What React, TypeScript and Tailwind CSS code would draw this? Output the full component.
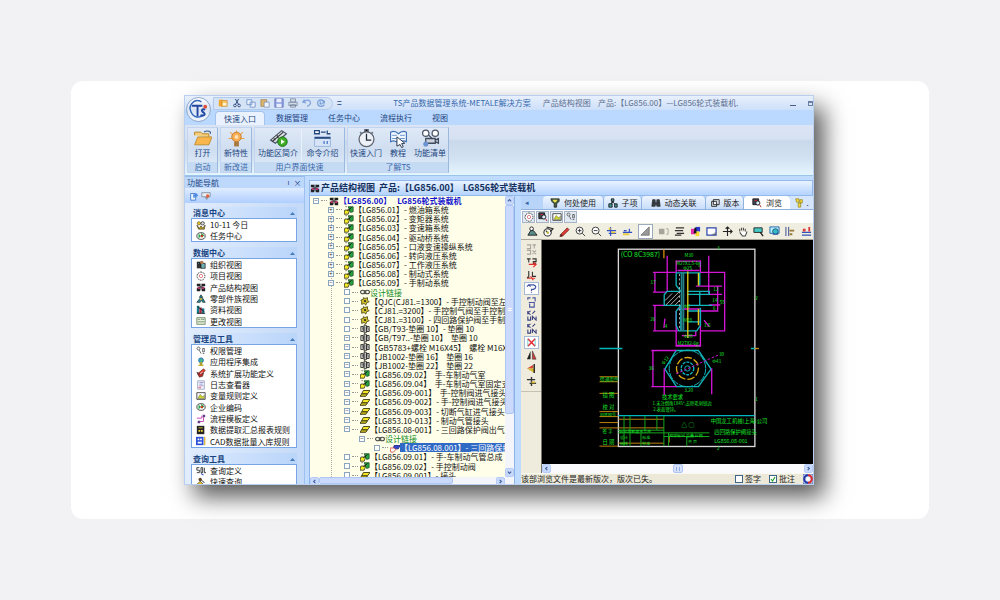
import type { ReactNode } from "react";

const glyphs: Record<string, ReactNode> = {
  folder: <><path d="M1 4V2h4l1 1h4v2" fill="#f4cf78" stroke="#b98324" strokeWidth=".6" /><path d="M1 10l2-5h9l-2 5z" fill="#f8b64c" stroke="#b98324" strokeWidth=".5" /><path d="M7 2c1-1 3-1 4 0v1" fill="none" stroke="#39588a" strokeWidth=".7" /></>,
  folders: <><path d="M1 2h5v8H1z" fill="#f0a52e" /><path d="M5 3h6v7H4z" fill="#f9c766" stroke="#c87b1c" strokeWidth=".7" /><path d="M6 6h4v3H6z" fill="#fff4d5" /></>,
  cut: <><path d="M4 1l4 7M8 1L4 8" stroke="#334e7e" strokeWidth="1.2" /><circle cx="3.5" cy="9" r="1.6" fill="none" stroke="#334e7e" strokeWidth="1.1" /><circle cx="8.5" cy="9" r="1.6" fill="none" stroke="#334e7e" strokeWidth="1.1" /></>,
  copy: <path d="M1 2h6v6H1zM5 5h6v6H5z" fill="#e8f0fc" stroke="#6e91c9" strokeWidth="1" />,
  paste: <><path d="M1 2h7v8H1z" fill="#dcb56b" stroke="#8b7546" strokeWidth=".7" /><path d="M5 5h6v6H5z" fill="#edf3fd" stroke="#7287ad" strokeWidth=".8" /></>,
  save: <><path d="M1 1h10v10H1z" fill="#8f9ee0" stroke="#6374ba" /><path d="M3 1h6v4H3zM3 7h6v4H3z" fill="#e8edfb" /></>,
  print: <><path d="M3 1h6v4H3zM1 5h10v4H1zM3 8h6v3H3z" fill="#d4dbe8" stroke="#75839c" strokeWidth=".9" /></>,
  undo: <path d="M3 2L1 5l4 1M2 5c3-4 9-3 8 2-1 2-2 3-4 3" fill="none" stroke="#7fa2da" strokeWidth="1.5" />,
  refresh: <path d="M10 3v3H7M10 6C9 1 2 1 2 6s6 5 8 2M5 4v3h2" fill="none" stroke="#6f98d6" strokeWidth="1.3" />,
  export: <><path d="M2 3h6v8H2z" fill="#eef5ff" stroke="#3a73c8" strokeWidth="1" /><path d="M5 8V4h3V2l3 3-3 3V6H7v2z" fill="#4c8be0" /></>,
  filter: <><path d="M1 2h10v5H1z" fill="#e9edf3" stroke="#737f92" strokeWidth=".9" /><path d="M4 7h5l-2 4z" fill="#8e97a7" /><circle cx="8" cy="6" r="2" fill="#e5603d" /></>,
  bulb: <><path d="M1 6h10M6 1v2M2 2l2 2M10 2L8 4" stroke="#f2a544" strokeWidth=".7" /><circle cx="6" cy="5" r="3" fill="#f7ae55" stroke="#c87a2d" strokeWidth=".6" /><circle cx="6" cy="5" r="1.2" fill="#ffe2b6" /><path d="M4.5 8h3v3h-3z" fill="#a7793f" /></>,
  film: <><path d="M1 7l7-6 3 2-7 6z" fill="#dadfe5" stroke="#465063" strokeWidth=".7" /><path d="M2 8l7-6M5 4l1 2M3 6l1 1" stroke="#333" strokeWidth=".7" /><circle cx="8.5" cy="8" r="3" fill="#3eac24" stroke="#176e12" strokeWidth=".6" /><path d="M7.6 6.4v3.2L10 8z" fill="#fff" /></>,
  command: <><path d="M1 1h3v2H1zM5 2h3M9 1v2h2" fill="#fff" stroke="#24477e" strokeWidth=".8" /><path d="M1 5h10v6H1z" fill="#d6e4f8" stroke="#8eaddb" strokeWidth=".5" /><path d="M1 5h10v1.2H1z" fill="#29497f" /><path d="M7 7.5v2M9 7.5v2" stroke="#4b76c5" strokeWidth=".8" /></>,
  clock: <><path d="M5 0h2v2H5zM2 2l1 1M10 2L9 3" stroke="#667083" strokeWidth="1" /><circle cx="6" cy="6.5" r="4.7" fill="#edf1f7" stroke="#5f6671" strokeWidth=".8" /><path d="M6 3v4h3" fill="none" stroke="#202a38" strokeWidth=".8" /></>,
  tutorial: <><path d="M1 2c2-1 4 0 5 1 1-1 3-2 5-1v6c-2-1-4 0-5 1-1-1-3-2-5-1z" fill="#eef6ff" stroke="#4071b6" strokeWidth=".7" /><path d="M2 4h3M2 6h3M7 4h3M7 6h3" stroke="#6a93cb" strokeWidth=".6" /><path d="M5 5l5 4-2 .2 1 2-1 .6-1-2-2 1z" fill="#fff" stroke="#25334a" strokeWidth=".6" /></>,
  camera: <><circle cx="3" cy="2.7" r="2" fill="#fff" stroke="#4b5565" strokeWidth=".8" /><circle cx="9" cy="2.7" r="2" fill="#fff" stroke="#4b5565" strokeWidth=".8" /><path d="M3 6h6v3H3zM9 7l2-1v3l-2-1M5 4l2 2" fill="#cbd2dc" stroke="#404a5c" strokeWidth=".8" /><circle cx="3" cy="9.5" r="1.6" fill="#6b93d2" /></>,
  people: <><circle cx="3.5" cy="4" r="2" fill="#e4c52e" stroke="#332b08" strokeWidth=".6" /><circle cx="8" cy="4" r="2" fill="#ddd" stroke="#111" strokeWidth=".8" /><path d="M1 6l3 4 2-3 2 3 3-4-1 5H3z" fill="#caa916" stroke="#111" strokeWidth=".6" /></>,
  globe: <><ellipse cx="6" cy="6" rx="5" ry="4" fill="#fff" stroke="#151515" strokeWidth=".9" /><path d="M3 3l3 3-3 3zM6 2l4 3-3 3z" fill="#22a64c" /><circle cx="7" cy="6" r="1.5" fill="#cb3a20" /></>,
  org: <><path d="M1 2h5v8H1z" fill="#333" /><path d="M2 3h2v2H2zM6 4h5v6H6z" fill="#70b1b2" stroke="#111" strokeWidth=".8" /><circle cx="7" cy="3" r="2" fill="#b5784c" /></>,
  ring: <><path d="M6 1l4 2 1 4-3 4H4L1 7l1-4z" fill="#fff" stroke="#555" strokeWidth="1.200" strokeDasharray="2 1" /><circle cx="6" cy="6" r="2" fill="none" stroke="#e06c79" /></>,
  cubes: <><path d="M1 2h4v3H1zM7 2h4v3H7zM1 7h4v4H1zM7 7h4v4H7z" fill="#222" /><path d="M2 6h3v2H2zM7 6h3v2H7z" fill="#e63f8c" /><path d="M6 2v8M3 6h6" stroke="#111" /></>,
  part: <><path d="M6 1L4 4l2 1 2-1zM5 5L1 10h4l2-3 1 3h3L8 5z" fill="#2c8991" stroke="#15272d" strokeWidth=".8" /><circle cx="6" cy="6" r="1.3" fill="#d6bc39" /></>,
  bars: <><path d="M1 1h3v9H1z" fill="#12788a" /><path d="M4 3h3v7H4z" fill="#b32a40" /><path d="M7 4h3v6H7z" fill="#217c94" /><path d="M1 10h10M2 2l8 6" stroke="#111" /></>,
  card: <><path d="M1 2h10v8H1z" fill="#e8f2d8" stroke="#456644" strokeWidth=".8" /><path d="M2 4h3M6 4h4M2 7h8" stroke="#4c6750" strokeWidth=".8" /></>,
  key: <><circle cx="3" cy="3" r="1.8" fill="none" stroke="#555" /><path d="M4 5l2 4M8 3h2v4H8zM8 9h2" fill="none" stroke="#555" /></>,
  lamp: <><circle cx="6" cy="4" r="3" fill="#32a4c8" stroke="#205b8f" strokeWidth=".7" /><path d="M5 2l3 2-2 2z" fill="#61c249" /><path d="M5 7h2v3H5zM3 10h6" stroke="#c3b230" strokeWidth="1.3" /></>,
  rocket: <><path d="M2 7l7-6 2 2-6 7z" fill="#e3402e" stroke="#661d16" strokeWidth=".8" /><path d="M1 5l4 2 4-1-1 4-4 1z" fill="#b92a25" stroke="#222" strokeWidth=".6" /><path d="M5 7l3-2" stroke="#fff" /></>,
  log: <><path d="M2 1h8v10H2z" fill="#f4f7ff" stroke="#7b86af" strokeWidth=".8" /><path d="M4 3h5M4 5h4M4 7h5" stroke="#7c74b4" strokeWidth=".8" /><path d="M3 8h3v2H3z" fill="#e68395" /></>,
  path: <><path d="M1 5h6V2M9 4v5H3" fill="none" stroke="#ce4abd" strokeWidth="1.2" /><path d="M8 1h3v3H8zM2 8h3v3H2z" fill="#653e87" /></>,
  book: <><path d="M1 1h9v10H1z" fill="#222" /><path d="M3 3h5v1H3zM3 6h2v2H3zM6 6h2v2H6z" fill="#ffdc35" /></>,
  cad: <><path d="M0 1h9v10H0z" fill="#2b50d8" /><path d="M2 3h2v2H2zM5 3h2v2H5zM2 7h5v2H2z" fill="#fff" /><path d="M10.500 1v10" stroke="#d8b52b" strokeWidth="1.500" /></>,
  sql: <><path d="M4 2H1v3h3v3H1M6 2h2v6H6zM10 2v6h2" fill="none" stroke="#333" strokeWidth="1.100" /><path d="M6 9l3 2" stroke="#3552c5" strokeWidth="1.300" /></>,
  user: <><circle cx="5" cy="3" r="2" fill="#5e4427" /><path d="M1 9l4-4 4 4v2H1z" fill="#e5be1e" stroke="#333" strokeWidth=".8" /><path d="M7 4l3 3" stroke="#111" strokeWidth="1.2" /></>,
  usercad: <><circle cx="5" cy="3" r="2" fill="#fff" stroke="#222" strokeWidth="1" /><path d="M1 10l3-5h3l4 5z" fill="#5b8f8c" stroke="#222" strokeWidth="1" /></>,
  orbit: <><circle cx="5" cy="7" r="4" fill="#fff" stroke="#222" strokeWidth="1.100" /><path d="M3 5l3 3M4 1l7 2-3 3" fill="none" stroke="#222" strokeWidth="1.200" /><circle cx="5" cy="7" r="1.300" fill="#c9bd2c" /></>,
  assembly: <><path d="M1 6h6l-2 5H0z" fill="#f7ef21" stroke="#222" strokeWidth=".9" /><path d="M5 2h6v6L8 9z" fill="#24a743" stroke="#143b15" strokeWidth=".8" /><path d="M4 7l5-4M2 2h1" stroke="#111" strokeWidth="1.2" /></>,
  yellow: <><path d="M4 3h8L9 7H2z" fill="#f3e622" stroke="#2f2c0f" strokeWidth="1" /><path d="M2 7h7l-2 3H0z" fill="#c9bb1c" stroke="#2f2c0f" strokeWidth="1" /></>,
  gear: <><path d="M4 2l2 1 3-1 0 3 2 2-3 1-1 3-2-2-3 1V7L1 5l3-1z" fill="#d4c22a" stroke="#4b4314" strokeWidth="1" /><circle cx="6" cy="6" r="1.300" fill="#222" /></>,
  bolt: <><path d="M1 3h3v6H1zM5 1l3 1v8l-3 1zM8 3h3v6H8z" fill="#e4e4e0" stroke="#222" strokeWidth="1" /><path d="M2 3l2 5M6 3v6M9 4l2 4" stroke="#555" strokeWidth=".8" /></>,
  chain: <><ellipse cx="3.4" cy="6" rx="2.7" ry="2.1" fill="none" stroke="#444" strokeWidth="1.3" /><ellipse cx="8.6" cy="6" rx="2.7" ry="2.1" fill="none" stroke="#444" strokeWidth="1.3" /><path d="M4 6h4" stroke="#444" /></>,
  blue: <><path d="M5 3h7l-2 4H4z" fill="#3144d5" stroke="#1d237c" /><path d="M0 6h5l2 2-3 3H1z" fill="#fff" stroke="#d34c45" /></>,
  funnel: <><path d="M1 1h10v3L8 7v4H5V7L2 4z" fill="#465c41" stroke="#111" strokeWidth=".8" /><path d="M3 2h6L7 5H5z" fill="#ece14d" /></>,
  nodes: <><path d="M6 2v3L2 9M6 5l4 4" stroke="#222" strokeWidth="1.2" /><path d="M4 1h3v3H4zM1 7h4v4H1zM8 7h3v4H8z" fill="#4a9d9c" stroke="#111" /></>,
  binoculars: <path d="M2 2h3v3h2V2h3l1 8H7V8H5v2H1zM2 6h2M8 6h2" fill="#3b4148" stroke="#111" strokeWidth=".7" />,
  version: <path d="M4 2h7v6H4zM2 4h6v6H2z" fill="#edf4fc" stroke="#222" strokeWidth="1.1" />,
  block: <><path d="M1 3h6v6H1z" fill="#a5a39a" /><path d="M9 3h2v6H9" fill="none" stroke="#a5a39a" /></>,
  view: <><path d="M1 1h7v7H1z" fill="#445" stroke="#111" /><circle cx="7" cy="6" r="2.5" fill="#def0ff" stroke="#111" /><path d="M9 8l2 3M3 3h3" stroke="#b52d32" strokeWidth="1.2" /></>,
  wrench: <><path d="M2 1h4v4H3zM7 2h3v4H7zM5 6h3v5H5z" fill="#f6d83c" stroke="#8d801e" strokeWidth=".8" /></>,
  picture: <><path d="M1 2h10v8H1z" fill="#fff" stroke="#333" /><path d="M2 9l3-5 3 3 2-2v4z" fill="#cbd42c" stroke="#555" strokeWidth=".5" /></>,
  pencil: <><path d="M2 9l7-7 2 2-7 7-3 1z" fill="#e33b32" stroke="#672522" strokeWidth=".8" /><path d="M1 10h3" stroke="#222" /></>,
  zoomin: <><circle cx="5" cy="5" r="3.8" fill="#fff" stroke="#333" /><path d="M3 5h4M5 3v4M8 8l3 3" stroke="#333" /></>,
  zoomout: <><circle cx="5" cy="5" r="3.8" fill="#fff" stroke="#333" /><path d="M3 5h4M8 8l3 3" stroke="#333" /></>,
  measure: <><path d="M5 1v10M1 5h10M3 8h8" stroke="#3452c6" strokeWidth="1.300" /><path d="M6 6h4v2H6zM3 2h2v2H3z" fill="#ebcb29" /></>,
  level: <><path d="M1 7h10M8 3v4M2 5h3" stroke="#2e4fc5" strokeWidth="1.3" /><path d="M1 8h7v2H1z" fill="#ebc83c" /></>,
  corner: <path d="M1 10L10 1v9z" fill="#999" stroke="#777" />,
  lines: <path d="M2 2h9M1 5h9M3 8h8M1 10h7" stroke="#333" strokeWidth="1.2" />,
  palette: <><path d="M1 3h5v6H1z" fill="#e12ca9" /><path d="M6 1h5v5H6z" fill="#2c3cd0" /><path d="M6 6h4v5H6z" fill="#f3dc2a" /><path d="M5 2h2v6H4z" fill="#161616" /></>,
  frame: <><path d="M1 2h10v8H1z" fill="#fff" stroke="#2d44ab" strokeWidth="1.3" /><path d="M7 9h3V7" stroke="#555" fill="none" /></>,
  move: <path d="M6 1v10M1 6h10M4 3l2-2 2 2M9 4l2 2-2 2" fill="none" stroke="#222" strokeWidth="1.2" />,
  hand: <path d="M3 6V3M5 5V2M7 5V2M9 6V3M3 7l3 4h3l2-5" fill="#fff" stroke="#444" strokeWidth="1.1" />,
  glass: <><path d="M1 2h9v5H1z" fill="#45ccc7" stroke="#222" /><path d="M8 7l3 4" stroke="#222" strokeWidth="1.5" /></>,
  glassblue: <><path d="M1 1h10v7H1z" fill="#b2efff" stroke="#2462a6" /><circle cx="7" cy="6" r="3" fill="#35bdc5" stroke="#20507b" /><path d="M4 9h6" stroke="#274fb2" /></>,
  align: <><path d="M1 1v10M4 1v10" stroke="#31448e" /><path d="M5 4h5v2H5zM5 8h3v2H5z" fill="#967b35" /></>,
  redblue: <><path d="M1 7h10M1 10h10" stroke="#3152b9" strokeWidth="1.3" /><path d="M2 3h3v3H2zM8 1h2v5H8z" fill="#df3a38" /></>,
  grid: <path d="M1 1h4v4H1M7 1h4M9 1v4M1 7h4v4H1M7 7l4 4M11 7l-4 4" fill="none" stroke="#aaa69b" strokeWidth="1.2" />,
  transfer: <><path d="M1 2h4M3 2v4M7 2h4v3H8v2h3" fill="none" stroke="#333" strokeWidth="1.2" /><path d="M3 8h7M8 6l3 2-3 3" fill="none" stroke="#e02f2b" strokeWidth="1.4" /></>,
  redmark: <><path d="M3 1v7H1M7 2v5h4" fill="none" stroke="#333" strokeWidth="1.2" /><path d="M1 9h9M5 7l3 4" stroke="#e43935" strokeWidth="1.3" /></>,
  question: <path d="M1 4l2-2 2 2M3 2h5c4 1 3 4 0 5H6v2M6 10v1" fill="none" stroke="#4756a7" strokeWidth="1.3" />,
  arrows: <path d="M2 3V1h3M7 1h3v4M3 6h6v5H4V7" fill="none" stroke="#4b569e" strokeWidth="1.2" />,
  ka: <path d="M2 1v4M5 1L2 3l3 2M7 4l3-3M2 7v4h3V7M7 11V7l4 4V7" fill="none" stroke="#3a4380" strokeWidth="1.2" />,
  cross: <><path d="M2 2l8 8M10 2l-8 8" stroke="#e52a34" strokeWidth="1.6" /><path d="M2 2v8M10 2v8" stroke="#45bac0" strokeWidth=".8" /></>,
  mirror: <><path d="M5 1v9H1z" fill="#222" /><path d="M7 1l4 9H7z" fill="#cf3c35" stroke="#333" strokeWidth=".6" /></>,
  flag: <><path d="M1 6l7-4v4z" fill="#d64c35" /><path d="M1 6h8v5z" fill="#d4b62f" /><path d="M9 1v10" stroke="#222" strokeWidth="1.5" /></>,
  flip: <><path d="M6 1v10M1 4h9M4 8h7" stroke="#333" strokeWidth="1.5" /><path d="M6 6h4v2H6z" fill="#d4b62f" /></>,
  logo: <><path d="M0 0h12v12H0z" fill="#dfe6f5" stroke="#2946a5" strokeWidth="1" /><path d="M6 1.500a4.500 4.500 0 0 1 0 9" fill="none" stroke="#d42c30" strokeWidth="2.500" /><path d="M6 10.500a4.500 4.500 0 0 1 0-9" fill="none" stroke="#2038a8" strokeWidth="2.500" /><circle cx="6" cy="6" r="2" fill="#fff" /></>,
};

function Icon({ name, className = "size-3" }: { name: string; className?: string }) {
  return <svg viewBox="0 0 12 12" aria-hidden="true" className={`block shrink-0 ${className}`}>{glyphs[name]}</svg>;
}

function Launcher({ icon, label, className }: { icon: string; label: string; className: string }) {
  return (
    <button className={`flex shrink-0 flex-col items-center whitespace-nowrap ${className}`}>
      <Icon name={icon} className="size-[19px]" />
      <span className="leading-[10px]">{label}</span>
    </button>
  );
}

function RibbonGroup({ caption, children, className }: { caption: string; children: ReactNode; className: string }) {
  return (
    <section className={`flex shrink-0 flex-col border border-[#c3d5ee] border-r-[#9bb9df] bg-gradient-to-b from-[#dfe9f7] via-[#cfdef0] to-[#e0edfb] ${className}`}>
      <div className="flex flex-1 justify-center pt-px">{children}</div>
      <h3 className="bg-[#c5dbf4] text-center leading-[10px] text-[#3e6aaa]">{caption}</h3>
    </section>
  );
}

function NavSection({ title, items, className }: { title: string; items: [string, string][]; className: string }) {
  return (
    <section className="shrink-0">
      <button className="flex h-[11px] w-full items-center justify-between bg-gradient-to-r from-[#dceafd] to-[#bad5fa] px-0.5 font-bold text-[#17437f]">
        {title}
        <svg viewBox="0 0 5 4" className="w-[5px]" aria-hidden="true"><path d="M0 4l2.500-3L5 4z" fill="#467bc0" /></svg>
      </button>
      <ul className={`flex flex-col border border-[#77a4e5] bg-white ${className}`}>
        {items.map(([icon, text]) => (
          <li key={text} className="flex flex-1 items-center">
            <a href="#nav" className="flex items-center gap-1 whitespace-nowrap pl-1 leading-[11px] text-[#111]">
              <Icon name={icon} className="size-[10px]" />{text}
            </a>
          </li>
        ))}
      </ul>
    </section>
  );
}

type Row = { level: "a" | "b" | "c" | "d" | "root"; icon: string; text: string; name?: string; tone?: "green" | "blue" | "selected"; mark?: string };
const rows: Row[] = [
  { level: "root", icon: "cubes", text: "【LG856.00】", name: "LG856轮式装载机", tone: "blue", mark: "−" },
  ...["燃油箱系统", "变矩器系统", "变速箱系统", "驱动桥系统", "口液变速操纵系统", "转向液压系统", "工作液压系统", "制动式系统", "手制动系统"].map((name, i): Row => ({
    level: "a", icon: "assembly", text: `【LG856.0${i + 1}】`, name: `- ${name}`, mark: i === 8 ? "−" : "+",
  })),
  { level: "b", icon: "chain", text: "设计链接", tone: "green" },
  { level: "b", icon: "gear", text: "【QJC(CJ81.=1300】- 手控制动阀至左前" },
  { level: "b", icon: "gear", text: "【CJ81.=3200】- 手控制气阀至手控制阀" },
  { level: "b", icon: "gear", text: "【CJ81.=3100】- 四回路保护阀至手制阀" },
  { level: "b", icon: "bolt", text: "【GB/T93-垫圈 10】- 垫圈 10" },
  { level: "b", icon: "bolt", text: "【GB/T97..-垫圈 10】  垫圈 10", mark: "−" },
  { level: "b", icon: "bolt", text: "【GB5783+螺栓 M16X45】  螺栓 M16X45", mark: "−" },
  { level: "b", icon: "bolt", text: "【JB1002-垫圈 16】  垫圈 16", mark: "−" },
  { level: "b", icon: "bolt", text: "【JB1002-垫圈 22】  垫圈 22", mark: "−" },
  { level: "b", icon: "assembly", text: "【LG856.09.02】  手-车制动气室", mark: "−" },
  { level: "b", icon: "assembly", text: "【LG856.09.04】  手-车制动气室固定支架", mark: "−" },
  { level: "b", icon: "yellow", text: "【LG856.09-001】  手-控制阀进气接头", mark: "−" },
  { level: "b", icon: "yellow", text: "【LG856.09-002】- 手-控制阀进气接头", mark: "−" },
  { level: "b", icon: "yellow", text: "【LG856.09-003】- 切断气缸进气接头", mark: "−" },
  { level: "b", icon: "yellow", text: "【LG853.10-013】- 制动气管接头", mark: "−" },
  { level: "b", icon: "yellow", text: "【LG856.08-001】- 三回路保护阀出气接头", mark: "−" },
  { level: "c", icon: "chain", text: "设计链接", tone: "green", mark: "−" },
  { level: "d", icon: "blue", text: "【LG856.08.001】- 三回路保护阀", tone: "selected" },
  { level: "b", icon: "assembly", text: "【LG856.09.01】- 手-车制动气管总成" },
  { level: "b", icon: "assembly", text: "【LG856.09.02】- 手控制动阀" },
  { level: "b", icon: "yellow", text: "【LG856.09.001】- 接头" },
];
const indents = { root: "pl-[3px]", a: "pl-[18px]", b: "pl-[34px]", c: "pl-[49px]", d: "pl-[64px]" };
const tones = { green: "text-[#168c28]", blue: "font-bold text-[#1414cf]", selected: "bg-[#316ac5] text-white" };

function Tree() {
  return (
    <ul className="flex h-[284px] shrink-0 flex-col justify-between">
      {rows.map((row, i) => (
        <li key={i} className={`flex h-[9px] items-center ${indents[row.level]}`}>
          <button aria-label="展开或折叠" className="flex size-[6px] shrink-0 items-center justify-center border border-[#8ba5bf] bg-white text-[6px] leading-none text-[#333]">{row.mark}</button>
          <span className="mx-0.5 w-1.5 shrink-0 border-t border-dotted border-[#999]" />
          <Icon name={row.icon} className="size-[10px]" />
          <a href="#part" className={`flex h-[9px] shrink-0 items-center whitespace-pre leading-[9px] ${row.tone ? tones[row.tone] : "text-[#111]"}`}>
            <span>{row.text}</span>{row.name && <span className={row.tone ? "pl-1.5" : ""}>{row.name}</span>}
          </a>
        </li>
      ))}
    </ul>
  );
}

function ScrollButton({ d }: { d: string }) {
  return (
    <button aria-label="滚动" className="flex size-[9px] shrink-0 items-center justify-center rounded-[2px] border border-[#b5ccf7] bg-[#c8d9fc]">
      <svg viewBox="0 0 6 6" className="size-[5px]" aria-hidden="true"><path d={d} fill="none" stroke="#45659e" strokeWidth="1.500" /></svg>
    </button>
  );
}

function Drawing() {
  return (
    <svg viewBox="541 241 272 223" role="img" aria-label="接头零件图" className="absolute inset-0 size-full">
      <g transform="translate(610 245) scale(.33333)" fill="none" strokeWidth="3">
        <rect x="23" y="13" width="411" height="594" stroke="#d9d9d9" strokeWidth="4" />
        <path d="M-34 312H35M422 312h12M23 514h410" stroke="#00b7bd" strokeWidth="4" />
        <path d="M434 312h12" stroke="#d38b13" strokeWidth="4" />
        <path d="M160 14v26" stroke="#d38b13" strokeWidth="4" />
        <path d="M133 83v59M127 83h70M127 142h41M133 182v77M127 182h36M127 259h76M170 33v109M295 33v115M197 46v38M270 46v38M195 49h76M201 77h66M268 83h75v176h-75M256 124h79M322 124v75H266M295 149h40M295 181h35M197 200v105h73V200M197 303h73M214 273h42v-14M203 193h65M212 193v-8" stroke="#d315d6" strokeWidth="4" />
        <path d="M197 84h71v38M197 84v38l14 18h-41l-9 10v32h50l-14 18v42l8 17h54l11-17v-53M230 140h67v9H230M230 182h76M268 140v42M211 182v77M231 232h37M231 199h37" stroke="#11b7bd" strokeWidth="4" />
        <path d="M213 83v176M219 83v176" stroke="#25838a" strokeWidth="5" />
        <path d="M207 88v168" stroke="#b0b0b0" strokeDasharray="6 7" />
        <path d="M163 168l22-22M166 181l40-40M180 180l28-28M194 181l14-15" stroke="#a9a9a9" strokeWidth="3" />
        <path d="M232 80v200M264 85v38M264 193v49" stroke="#e0cf16" strokeWidth="4" />
        <path d="M197 318h67l38 56-38 53h-66l-35-53z" stroke="#11b7bd" strokeWidth="4" />
        <circle cx="231" cy="372" r="55" stroke="#11b7bd" strokeDasharray="20 3" />
        <circle cx="231" cy="372" r="33" stroke="#d9a919" strokeWidth="4" strokeDasharray="23 6" />
        <circle cx="231" cy="372" r="19" stroke="#11b7bd" strokeWidth="4" strokeDasharray="9 3" />
        <circle cx="231" cy="372" r="8" stroke="#11aeb4" />
        <path d="M127 318v109M122 318h75M122 427h76M161 372v80M304 372v78M163 222l-3 28M281 227l16 20" stroke="#d315d6" strokeWidth="4" />
        <path d="M197 388l128-57" stroke="#c515c8" strokeDasharray="8 5" />
        <path d="M23 525h137M23 551h137M23 597h137M-34 397h56M-34 412h56M-34 447h56M-34 502h56M-34 517h56M-34 535h56M-34 551h56M-34 606h56M176 575v20" stroke="#bd8110" />
        <path d="M23 558h137M23 566h137M40 515v91M58 515v91M103 515v43M139 515v43M91 566v40M160 515v91M160 566h137M160 577h137M174 566v40M229 577v29" stroke="#16a51e" strokeWidth="3" />
        <g fill="#17e52a" stroke="none" fontFamily='"Noto Sans CJK SC"' fontSize="14">
          <text x="30" y="35" fontSize="21">(CO 8C3987)</text>
          <text x="222" y="35">M30</text><text x="197" y="61">M27X1.5-6g</text><text x="218" y="76">Φ25</text>
          <text x="120" y="118">17</text><text x="119" y="228">26</text><text x="309" y="139">12</text><text x="306" y="171">14</text><text x="328" y="178">55</text><text x="308" y="196">6</text>
          <text x="219" y="190">Φ8</text><text x="218" y="231">M18</text><text x="163" y="249">4</text><text x="281" y="247">1.5</text><text x="220" y="280">Φ20</text><text x="202" y="300">M27X2-6g</text>
          <text x="114" y="378">36</text><text x="326" y="335">30</text><text x="306" y="357">Φ41</text><text x="151" y="357" transform="rotate(-55 160 350)">Φ12</text><text x="221" y="442">3.20</text>
          <text x="154" y="463" fontSize="16">技术要求</text><text x="126" y="482" fontSize="13">1.未注倒角1X45°,去除毛刺锐边</text><text x="128" y="499" fontSize="13">2.表面镀锌。</text>
          <text x="-32" y="410">借通用件</text><text x="-25" y="459" fontSize="16">描 图</text><text x="-25" y="494" fontSize="16">校 对</text><text x="-32" y="515" fontSize="12">旧底图号</text><text x="-25" y="565">签 字</text><text x="-25" y="599" fontSize="16">日 期</text>
          <text x="26" y="565" fontSize="12">标记处数更改文件</text><text x="28" y="583" fontSize="12">设计</text><text x="28" y="602" fontSize="12">审核</text><text x="95" y="583" fontSize="12">标准</text><text x="95" y="602" fontSize="12">批准</text>
          <text x="176" y="577" fontSize="12">图样标记 重量 比例</text><text x="233" y="597" fontSize="12">共 页</text><text x="212" y="548" fontSize="18">△ ○</text>
          <text x="301" y="536" fontSize="16">中国龙工机械(上海)公司</text><text x="312" y="568" fontSize="16">四回路保护阀接头</text><text x="312" y="598" fontSize="16">LG856.08-001</text>
          <text x="320" y="15">3</text><text x="435" y="165">2</text><text x="435" y="469">1</text><text x="320" y="619">2</text>
        </g>
      </g>
    </svg>
  );
}

const quickTools = ["folders", "cut", "copy", "paste", "save", "print", "undo", "refresh"];
const canvasTools = ["usercad", "orbit", "pencil", "zoomin", "zoomout", "measure", "level", "corner", "block", "lines", "palette", "frame", "move", "hand", "glass", "glassblue", "align", "redblue"];
const sideTools = ["grid", "transfer", "redmark", "question", "arrows", "ka", "ka", "cross", "mirror", "flag", "flip"];
const menuTabs = ["数据管理", "任务中心", "流程执行", "视图"];
const viewTabs: [string, string, string][] = [["funnel", "何处使用", "w-[61px]"], ["nodes", "子项", "w-[38px]"], ["binoculars", "动态关联", "w-[64px]"], ["version", "版本", "w-[38px]"]];

export default function App() {
  return (
    <main className="flex h-screen min-h-[600px] bg-[#f2f2f4] px-[71px] py-[81px] font-['Noto_Sans_CJK_SC',sans-serif] text-[8px]">
      <div className="flex min-w-0 flex-1 rounded-xl bg-white pb-[34px] pl-[113px] pr-[115px] pt-[14px]">
        <div className="relative flex min-w-0 flex-1 flex-col overflow-hidden border border-[#b8cff0] bg-[#bfdbff] text-[#1c4580] shadow-[10px_12px_22px_rgba(0,0,0,0.65)]">
          <header className="flex h-[14px] shrink-0 items-center bg-gradient-to-b from-[#e8f0fc] to-[#cddffa] pl-[28px]">
            <nav aria-label="快速访问" className="flex h-[13px] items-center gap-1 rounded-r-full border border-[#b3c9ea] bg-[#d5e3f7] pl-1 pr-1.5">
              {quickTools.map((tool) => <button key={tool} aria-label={tool}><Icon name={tool} className="size-[10px]" /></button>)}
            </nav>
            <button aria-label="自定义" className="ml-1 font-bold">=</button>
            <h1 className="flex min-w-0 flex-1 items-center justify-center gap-3 whitespace-nowrap text-[#5c6f8e]">
              <span className="text-[#3469ad]">TS产品数据管理系统-METALE解决方案</span><span>产品结构视图&nbsp;&nbsp;&nbsp; 产品:【LG856.00】—LG856轮式装载机.</span>
            </h1>
            <div className="flex gap-3">
              <button aria-label="最小化" className="mt-1 w-1.5 border-b border-[#495e80]" />
              <button aria-label="还原" className="size-[5px] border border-t-2 border-[#6c7fa5]" />
            </div>
          </header>

          <nav aria-label="功能区" className="flex h-[15px] shrink-0 items-end gap-5 bg-[#bbd8ff] pl-[30px] leading-[14px]">
            <button className="-mr-[9px] h-[14px] rounded-t-sm border border-b-0 border-[#a3c2ec] bg-[#e9f2fe] px-2 leading-[13px]">快速入口</button>
            {menuTabs.map((tab) => <button key={tab}>{tab}</button>)}
          </nav>
          <div className="flex h-[51px] shrink-0 gap-0.5 border-b border-[#9ac4ea] bg-[linear-gradient(180deg,#dbe4f5_0%,#d6e1f2_28%,#c9d9eb_32%,#d2e1f1_65%,#e5f5fe_100%)] py-0.5 pl-0.5">
            <RibbonGroup caption="启动" className="w-[31px]"><Launcher icon="folder" label="打开" className="w-7" /></RibbonGroup>
            <RibbonGroup caption="新改进" className="w-[32px]"><Launcher icon="bulb" label="新特性" className="w-7" /></RibbonGroup>
            <RibbonGroup caption="用户界面快速" className="w-[91px]">
              <Launcher icon="film" label="功能区简介" className="w-[46px] border-r border-[#e9f2fd]" /><Launcher icon="command" label="命令介绍" className="w-[42px]" />
            </RibbonGroup>
            <RibbonGroup caption="了解TS" className="w-[102px]">
              <Launcher icon="clock" label="快速入门" className="w-9" /><Launcher icon="tutorial" label="教程" className="w-7" /><Launcher icon="camera" label="功能清单" className="w-9" />
            </RibbonGroup>
          </div>

          <div className="flex min-h-0 flex-1">
            <aside className="flex w-[120px] shrink-0 flex-col overflow-hidden border-r border-[#9fc0ed] bg-gradient-to-r from-[#e2edfc] to-[#c4daf8]">
              <div className="flex h-3 shrink-0 items-center border-t border-[#98bcec] bg-[#bed8fc] px-0.5 leading-[11px]">
                <h2 className="flex-1">功能导航</h2><button className="w-[9px] text-[7px]" aria-label="固定">ı</button><button className="w-[9px]" aria-label="关闭">×</button>
              </div>
              <div className="flex h-[15px] shrink-0 items-center gap-0.5 bg-gradient-to-b from-[#e0edff] to-[#afceff] pl-1">
                <button aria-label="导出"><Icon name="export" className="size-[10px]" /></button><button aria-label="筛选"><Icon name="filter" className="size-[10px]" /></button>
              </div>
              <div className="flex flex-col gap-[5px] pl-1.5 pr-[7px] pt-1">
                <NavSection title="消息中心" className="h-6" items={[["people", "10-11 今日"], ["globe", "任务中心"]]} />
                <NavSection title="数据中心" className="h-[70px]" items={[["org", "组织视图"], ["ring", "项目视图"], ["cubes", "产品结构视图"], ["part", "零部件族视图"], ["bars", "资料视图"], ["card", "更改视图"]]} />
                <NavSection title="管理员工具" className="h-[104px]" items={[["key", "权限管理"], ["lamp", "应用程序集成"], ["rocket", "系统扩展功能定义"], ["log", "日志查看器"], ["picture", "变量规则定义"], ["globe", "企业编码"], ["path", "流程模板定义"], ["book", "数据提取汇总报表规则"], ["cad", "CAD数据批量入库规则"]]} />
                <NavSection title="查询工具" className="h-6" items={[["sql", "查询定义"], ["user", "快速查询"]]} />
              </div>
            </aside>

            <section className="ml-1 flex min-w-0 flex-1 flex-col pt-1">
              <header className="flex h-4 shrink-0 items-center gap-px border border-[#94b9ec] bg-gradient-to-b from-[#e9f3ff] to-[#b4d3ff] font-bold text-[#142f5c]">
                <Icon name="cubes" className="size-[10px]" />
                <h2 className="whitespace-pre text-[9px] leading-[14px]">产品结构视图  产品:【LG856.00】  LG856轮式装载机</h2>
              </header>
              <div className="flex min-h-0 flex-1">
                <section aria-label="产品结构" className="flex w-[206px] shrink-0 flex-col border-x border-[#8fb4ea] bg-[#ffffe9]">
                  <div className="flex min-h-0 flex-1">
                    <div className="relative min-w-0 flex-1 overflow-hidden">
                      <span className="absolute bottom-0 left-[21px] top-3 border-l border-dotted border-[#aaa]" />
                      <div className="relative"><Tree /></div>
                    </div>
                    <div className="flex w-[9px] shrink-0 flex-col bg-[#f4f5fb]">
                      <ScrollButton d="M1 4l2-2 2 2" />
                      <div className="flex flex-[207] items-center justify-center rounded-[2px] border border-[#afc6f5] bg-[#cbdafc]"><span className="h-[3px] w-1 border-y border-white" /></div>
                      <div className="flex-[54]" /><ScrollButton d="M1 2l2 2 2-2" />
                    </div>
                  </div>
                  <div className="flex h-[7px] shrink-0 overflow-hidden bg-[#f4f5fb]">
                    <ScrollButton d="M4 1L2 3l2 2" /><div className="w-[134px] rounded-[2px] border border-[#afc6f5] bg-[#cbdafc]" /><div className="flex-1" /><ScrollButton d="M2 1l2 2-2 2" /><div className="w-[9px]" />
                  </div>
                </section>

                <section aria-label="图纸浏览" className="ml-1.5 flex min-w-0 flex-1 flex-col bg-[#ece9d8] text-[#222]">
                  <nav className="flex h-[14px] shrink-0 items-end overflow-hidden border-b border-[#8fb2df] bg-[#b8d4f9] leading-[13px]">
                    <button className="w-[22px] shrink-0 pl-1 text-left text-[7px] text-[#3263ad]">◂</button>
                    {viewTabs.map(([icon, label, width]) => (
                      <button key={label} className={`flex h-[13px] shrink-0 items-center justify-center gap-1 whitespace-nowrap rounded-t-sm border-r border-[#8fb2df] bg-gradient-to-b from-[#eef5ff] to-[#c8ddfa] ${width}`}><Icon name={icon} className="size-[10px]" />{label}</button>
                    ))}
                    <button className="flex h-[13px] w-[46px] shrink-0 items-center justify-center gap-1 rounded-t-sm bg-white"><Icon name="view" className="size-[10px]" />浏览</button>
                    <button aria-label="工具" className="flex h-[13px] flex-1 items-center justify-center gap-0.5 bg-[#d5e5fb]"><Icon name="wrench" className="size-[10px]" />.</button>
                  </nav>
                  <div className="flex h-[13px] shrink-0 items-center gap-px bg-white pl-px">
                    {["ring", "view", "picture", "key"].map((name) => <button key={name} aria-label={name} className="flex h-3 w-[13px] items-center justify-center border border-[#a7b4c5] bg-[#e1eaf2]"><Icon name={name} className="size-[10px]" /></button>)}
                  </div>
                  <div className="flex h-[17px] shrink-0 items-center justify-between overflow-hidden border-b border-[#aaa69a] bg-[#f0ede1] pl-1.5 pr-px">
                    {canvasTools.map((name) => <button key={name} aria-label={name} className={name === "corner" ? "border border-[#9caabd] bg-white p-px" : ""}><Icon name={name} className="size-[11px]" /></button>)}
                  </div>
                  <div className="flex min-h-0 flex-1">
                    <div className="flex w-5 shrink-0 flex-col bg-[#efecde]">
                      <div className="flex h-[152px] flex-col items-center justify-between border-b border-[#c5c1b3] py-1">
                        {sideTools.map((name, i) => <button key={i} aria-label={name} className={name === "question" || name === "cross" ? "border border-[#a5bad9] bg-white px-px" : ""}><Icon name={name} className="size-[11px]" /></button>)}
                      </div>
                    </div>
                    <div className="flex min-w-0 flex-1 flex-col border-l border-[#77756c]">
                      <div className="relative min-h-0 flex-1 bg-black"><Drawing /></div>
                      <div className="flex h-[9px] shrink-0 items-center justify-between bg-[#fafafd]">
                        <ScrollButton d="M4 1L2 3l2 2" /><div className="flex h-[9px] w-[10px] items-center justify-center rounded-[2px] border border-[#adc4f5] bg-[#d6e2fd]"><span className="h-1 w-1 border-x border-[#8faae0]" /></div><ScrollButton d="M2 1l2 2-2 2" />
                      </div>
                    </div>
                  </div>
                  <footer className="flex h-[11px] shrink-0 items-center overflow-hidden border-t border-[#f9f8f1] leading-[10px]">
                    <p className="flex-1 truncate">该部浏览文件是最新版次，版次已失。</p>
                    <label className="flex items-center gap-0.5"><input type="checkbox" className="size-2 appearance-none border border-[#3e6488] bg-white" />签字</label>
                    <label className="ml-2 flex items-center gap-0.5">
                      <span className="relative flex"><input type="checkbox" defaultChecked className="size-2 appearance-none border border-[#3e6488] bg-white" /><svg viewBox="0 0 8 8" className="pointer-events-none absolute inset-0" aria-hidden="true"><path d="M2 4l1.500 2L6 2" fill="none" stroke="#25a329" strokeWidth="1.200" /></svg></span>批注
                    </label>
                    <button aria-label="关于" className="ml-2"><Icon name="logo" className="size-[10px]" /></button>
                  </footer>
                </section>
              </div>
            </section>
          </div>
          <button aria-label="主菜单" className="absolute left-px top-px size-[25px] rounded-full border border-[#8ea8cb] bg-gradient-to-b from-white via-[#d8e3f2] to-[#f3f8ff]">
            <svg viewBox="0 0 24 24" aria-hidden="true" className="size-full">
              <path d="M15 4C8 0 1 7 4 14s9 7 13 4" fill="none" stroke="#3266bd" strokeWidth="1.500" />
              <path d="M5 8h11M11 8v11M19 12c-3-1-5 1-2 3s1 4-3 3" fill="none" stroke="#20469f" strokeWidth="2" />
              <circle cx="19" cy="9" r="2" fill="#df4e37" />
            </svg>
          </button>
        </div>
      </div>
    </main>
  );
}
